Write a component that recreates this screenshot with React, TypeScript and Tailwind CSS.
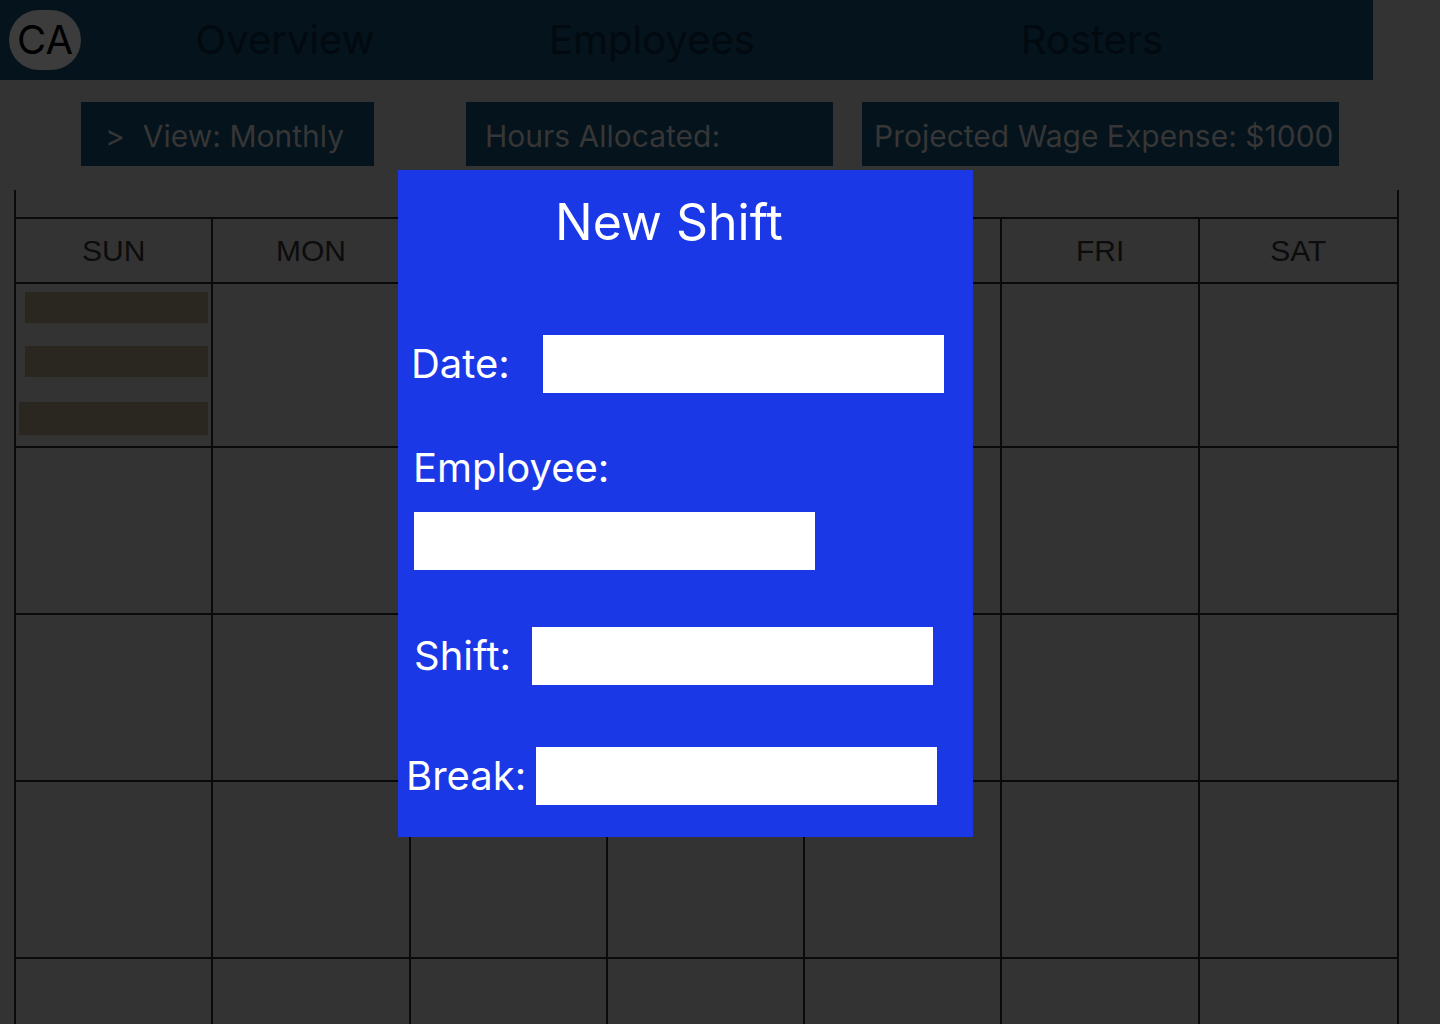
const days = ["SUN", "MON", "TUE", "WED", "THU", "FRI", "SAT"];
const rowHeights = ["h-[164px]", "h-[167px]", "h-[167px]", "h-[177px]", "h-[120px]"];

function NavBar() {
  return (
    <div className="flex h-20 w-[1373px] items-center bg-[#04131c] font-['Inter',sans-serif] text-[40px] text-[#020a10]">
      <div className="ml-[9px] flex h-[60px] w-[72px] items-center justify-center rounded-full bg-[#3c3c3c] text-[#000]">
        CA
      </div>
      <div className="flex w-[408px] justify-center">Overview</div>
      <div className="flex w-[326px] justify-center">Employees</div>
      <div className="flex w-[554px] justify-center">Rosters</div>
    </div>
  );
}

function StatBar() {
  return (
    <div className="mt-[22px] flex h-16 font-['Inter',sans-serif] text-[30px] text-[#363636]">
      <div className="ml-[81px] flex w-[293px] items-center bg-[#05131c] pl-[24px] pt-[4px]">
        <span>&gt;</span>
        <span className="ml-[18px]">View: Monthly</span>
      </div>
      <div className="ml-[92px] flex w-[367px] items-center bg-[#05131c] pl-[19px] pt-[4px]">Hours Allocated:</div>
      <div className="ml-[29px] flex w-[477px] items-center bg-[#05131c] pl-[12px] pt-[4px]">
        Projected Wage Expense: $1000
      </div>
    </div>
  );
}

function Calendar() {
  return (
    <div className="ml-[14px] mt-[24px] w-[1385px] border-l-2 border-r-2 border-[#0a0a0a] font-['Liberation_Sans',Arial,sans-serif]">
      <div className="h-[27px]" />
      <div className="grid grid-cols-7 border-t-2 border-[#0a0a0a]">
        {days.map((d, i) => (
          <div
            key={d}
            className={`flex h-[65px] items-center justify-center border-b-2 border-[#0a0a0a] text-[30px] text-[#0c0c0c] ${i < 6 ? "border-r-2" : ""}`}
          >
            {d}
          </div>
        ))}
      </div>
      {rowHeights.map((h, r) => (
        <div key={r} className="grid grid-cols-7">
          {days.map((d, i) => (
            <div
              key={d}
              className={`${h} border-b-2 border-[#0a0a0a] ${i < 6 ? "border-r-2" : ""}`}
            >
              {r === 0 && i === 0 && (
                <div className="flex flex-col pt-[8px]">
                  <div className="ml-[9px] h-[31px] w-[183px] bg-[#2a2620]" />
                  <div className="ml-[9px] mt-[23px] h-[31px] w-[183px] bg-[#2a2620]" />
                  <div className="ml-[3px] mt-[25px] h-[33px] w-[189px] bg-[#2a2620]" />
                </div>
              )}
            </div>
          ))}
        </div>
      ))}
    </div>
  );
}

function NewShiftModal() {
  return (
    <div className="absolute left-[398px] top-[170px] h-[667px] w-[575px] bg-[#1a38e6] font-['Inter',sans-serif] text-white">
      <div className="pl-[157px] pt-[27px] text-[50px] leading-none">New Shift</div>

      <div className="mt-[88px] flex h-[58px] items-center pl-[13px]">
        <div className="w-[132px] text-[40px] leading-none">Date:</div>
        <div className="h-[58px] w-[401px] bg-white" />
      </div>

      <div className="mt-[55px] pl-[15px] text-[40px] leading-none">Employee:</div>
      <div className="ml-[16px] mt-[24px] h-[58px] w-[401px] bg-white" />

      <div className="mt-[57px] flex h-[58px] items-center pl-[16px]">
        <div className="w-[118px] text-[40px] leading-none">Shift:</div>
        <div className="h-[58px] w-[401px] bg-white" />
      </div>

      <div className="mt-[62px] flex h-[58px] items-center pl-[8px]">
        <div className="w-[130px] text-[40px] leading-none">Break:</div>
        <div className="h-[58px] w-[401px] bg-white" />
      </div>
    </div>
  );
}

export default function App() {
  return (
    <div className="relative h-[1024px] w-[1440px] overflow-hidden bg-[#333333]">
      <NavBar />
      <StatBar />
      <Calendar />
      <NewShiftModal />
    </div>
  );
}
